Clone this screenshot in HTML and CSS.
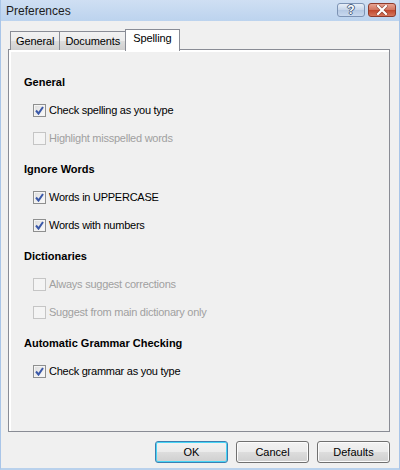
FILE: index.html
```html
<!DOCTYPE html>
<html lang="en">
<head>
    <meta charset="UTF-8">
    <title>Preferences</title>
    <link rel="stylesheet" href="styles.css">
</head>
<body>
    <div class="window">
        <div class="titlebar">
            <span class="title">Preferences</span>
            <div class="caption-buttons">
                <span class="cap-btn help">?</span>
                <span class="cap-btn close">
                    <svg width="12" height="10" viewBox="0 0 12 10"><path d="M2 1 L10 9 M10 1 L2 9" stroke="#5a2015" stroke-width="3.6" stroke-linecap="square" opacity="0.5"/><path d="M2 1 L10 9 M10 1 L2 9" stroke="#fff" stroke-width="2.2" stroke-linecap="square"/></svg>
                </span>
            </div>
        </div>
        <div class="client">
            <div class="tabs">
                <span class="tab">General</span>
                <span class="tab">Documents</span>
                <span class="tab selected">Spelling</span>
            </div>
            <div class="panel">
                <div class="section">
                    <div class="heading">General</div>
                    <label class="option"><span class="box checked"></span>Check spelling as you type</label>
                    <label class="option disabled"><span class="box"></span>Highlight misspelled words</label>
                </div>
                <div class="section">
                    <div class="heading">Ignore Words</div>
                    <label class="option"><span class="box checked"></span>Words in UPPERCASE</label>
                    <label class="option"><span class="box checked"></span>Words with numbers</label>
                </div>
                <div class="section">
                    <div class="heading">Dictionaries</div>
                    <label class="option disabled"><span class="box"></span>Always suggest corrections</label>
                    <label class="option disabled"><span class="box"></span>Suggest from main dictionary only</label>
                </div>
                <div class="section">
                    <div class="heading">Automatic Grammar Checking</div>
                    <label class="option"><span class="box checked"></span>Check grammar as you type</label>
                </div>
            </div>
            <div class="buttons">
                <button class="btn default">OK</button>
                <button class="btn">Cancel</button>
                <button class="btn">Defaults</button>
            </div>
        </div>
    </div>
</body>
</html>
```

FILE: styles.css
```css
/* Dialog window */
body {
    margin: 0;
    font-family: 'Liberation Sans', Arial, sans-serif;
    font-size: 11px;
    color: #000;
    background: #f0f0f0;
}
.window {
    width: 400px;
    height: 470px;
    box-sizing: border-box;
    border-left: 1px solid #a9c5e8;
    border-right: 1px solid #a9c5e8;
    border-bottom: 2px solid #b9d1ec;
    display: flex;
    flex-direction: column;
    background: #f0f0f0;
}
.titlebar {
    height: 21px;
    flex: none;
    display: flex;
    align-items: flex-start;
    justify-content: space-between;
    background: linear-gradient(#cfdff3, #bcd3ee);
}
.title {
    font-size: 12px;
    margin: 4px 0 0 5px;
    color: #1c1c1c;
}
.caption-buttons {
    display: flex;
    gap: 3px;
    margin: 3px 3px 0 0;
}
.cap-btn {
    height: 14px;
    border-radius: 3px;
    display: flex;
    align-items: center;
    justify-content: center;
    box-sizing: border-box;
}
.help {
    width: 28px;
    border: 1px solid #7d93b4;
    background: linear-gradient(#e8eff8, #c6d5ea 50%, #b4c8e3 51%, #c8d8ee);
    color: #fff;
    font-weight: bold;
    font-size: 12px;
    text-shadow: 1px 0 0 #4a5f80, -1px 0 0 #4a5f80, 0 1px 0 #4a5f80, 0 -1px 0 #4a5f80;
}
.close {
    width: 28px;
    border: 1px solid #8e3b2c;
    background: linear-gradient(#e8a493, #d0735d 50%, #c0462c 51%, #d6765c);
}
.client {
    flex: 1;
    display: flex;
    flex-direction: column;
    padding: 7px 9px 0 7px;
}

/* Tabs */
.tabs {
    display: flex;
    align-items: flex-end;
    padding-left: 2px;
    height: 21px;
    position: relative;
    z-index: 1;
}
.tab {
    height: 18px;
    line-height: 18px;
    padding: 0 5px;
    letter-spacing: -0.1px;
    border: 1px solid #898c95;
    border-bottom: none;
    background: linear-gradient(#f2f2f2, #ebebeb 50%, #dddddd 51%, #cfcfcf);
    margin-right: -1px;
    margin-bottom: -1px;
}
.tab.selected {
    height: 21px;
    line-height: 17px;
    padding: 0 7px;
    background: #fff;
    margin-bottom: -2px;
}
.panel {
    height: 383px;
    box-sizing: border-box;
    border: 1px solid #898c95;
    box-shadow: inset 2px 2px 0 #fff;
    padding: 26px 15px 0 15px;
}

/* Options */
.section {
    display: flex;
    flex-direction: column;
    gap: 15px;
    margin-bottom: 18px;
}
.heading {
    font-weight: bold;
    line-height: 13px;
    height: 13px;
}
.option {
    display: flex;
    align-items: center;
    gap: 3px;
    line-height: 13px;
    height: 13px;
    padding-left: 9px;
    letter-spacing: -0.25px;
}
.option.disabled {
    color: #a0a0a0;
}
.box {
    width: 13px;
    height: 13px;
    box-sizing: border-box;
    border: 1px solid #8e8f8f;
    background: linear-gradient(135deg, #dcdcdc, #fcfcfc);
    box-shadow: inset 0 0 0 1px #f4f4f4;
    flex: none;
}
.disabled .box {
    border-color: #c5c5c5;
    background: #f4f4f4;
}
.box.checked {
    background: url("data:image/svg+xml,%3Csvg xmlns='http://www.w3.org/2000/svg' width='11' height='11'%3E%3Cpath d='M2 5.5 L4.5 8.5 L9 2' fill='none' stroke='%233a58a8' stroke-width='2'/%3E%3C/svg%3E") center no-repeat, linear-gradient(135deg, #dcdcdc, #fcfcfc);
}

/* Buttons */
.buttons {
    display: flex;
    justify-content: flex-end;
    gap: 8px;
    margin-top: 9px;
}
.btn {
    width: 73px;
    height: 22px;
    font-family: 'Liberation Sans', Arial, sans-serif;
    font-size: 11px;
    border: 1px solid #707070;
    border-radius: 3px;
    background: linear-gradient(#f2f2f2, #ebebeb 50%, #dddddd 51%, #cfcfcf);
    box-shadow: inset 0 0 0 1px #fcfcfc;
    padding: 0;
}
.btn.default {
    border-color: #3c7fb1;
    box-shadow: inset 0 0 0 1px #48d5f6;
}
```
